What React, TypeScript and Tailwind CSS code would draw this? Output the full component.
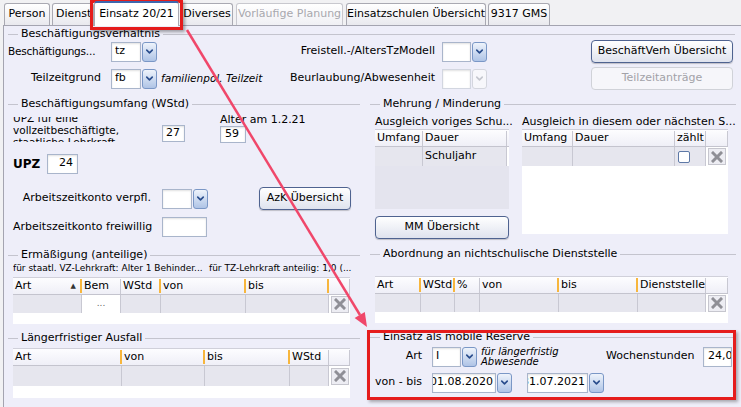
import { ChevronDown } from 'lucide-react';

type Col = { w: string; label?: string; sep?: 'o' | 'g'; sort?: boolean };
type Cell = 'g' | 'dots' | 'x' | 'check' | 'w' | { text: string };

function GroupTitle({ text }: { text: string }) {
  return (
    <div className="flex h-[14px] items-center">
      <div className="h-px w-[10px] bg-[#c4c4ce]" />
      <span className="whitespace-nowrap px-[3px] leading-[14px]">{text}</span>
      <div className="h-px flex-1 bg-[#c4c4ce]" />
    </div>
  );
}

function Combo({ value, textW, disabled, clipLeft }: { value: string; textW: string; disabled?: boolean; clipLeft?: boolean }) {
  return (
    <div className="flex h-[20px] items-stretch">
      <div
        className={`flex items-center overflow-hidden border bg-white shadow-[inset_0_1px_2px_rgba(0,0,0,0.12)] ${textW} ${
          disabled ? 'border-[#d2d6e0]' : 'border-[#a9b5cb]'
        } ${clipLeft ? 'justify-end px-[2px]' : 'px-[3px]'}`}
      >
        <span className="whitespace-nowrap">{value}</span>
      </div>
      <div
        className={`ml-px flex w-[15px] items-center justify-center rounded-[3px] border ${
          disabled
            ? 'border-[#d4d6de] bg-[#f7f7fb] text-[#c4c6ce]'
            : 'border-[#7a97c6] bg-linear-to-b from-[#eef3fb] to-[#afc4e6] text-[#2a4d8d]'
        }`}
      >
        <ChevronDown size={11} strokeWidth={3.5} />
      </div>
    </div>
  );
}

function Field({ value, w, right }: { value: string; w: string; right?: boolean }) {
  return (
    <div
      className={`flex h-full items-center overflow-hidden whitespace-nowrap border border-[#a9b5cb] bg-white px-[4px] shadow-[inset_0_1px_2px_rgba(0,0,0,0.12)] ${w} ${
        right ? 'justify-end' : ''
      }`}
    >
      {value}
    </div>
  );
}

function Btn({ label, w, disabled }: { label: string; w: string; disabled?: boolean }) {
  return (
    <div
      className={`flex h-[23px] items-center justify-center whitespace-nowrap rounded-[4px] border ${w} ${
        disabled
          ? 'border-[#d0d2d8] bg-[#f6f6fa] text-[#a2a2a8]'
          : 'border-[#4f6390] bg-linear-to-b from-white to-[#dfe3ee] shadow-[0_1px_1px_rgba(0,0,0,0.2)]'
      }`}
    >
      {label}
    </div>
  );
}

function XButton() {
  return (
    <div className="flex h-[17px] w-[18px] items-center justify-center border border-[#c6c6ce] bg-[#ededf3]">
      <svg width="12" height="12" viewBox="0 0 12 12">
        <path d="M2 2 L10 10 M10 2 L2 10" stroke="#8f8f96" strokeWidth="3" strokeLinecap="square" />
      </svg>
    </div>
  );
}

function Table({ cols, cells, rowH, fill }: { cols: Col[]; cells: Cell[]; rowH: string; fill: string }) {
  return (
    <div className="border-t border-[#d0d0da]">
      <div className="flex h-[17px] border-b border-[#c4c4ce] bg-linear-to-b from-[#fdfdff] to-[#efeff7]">
        {cols.map((c, i) => (
          <div key={i} className={`flex items-center ${c.w}`}>
            <span className="flex-1 overflow-hidden whitespace-nowrap pl-[2px]">{c.label}</span>
            {c.sort && <span className="mr-[4px] text-[7px] text-[#333]">▲</span>}
            {c.sep === 'o' && <span className="h-[14px] w-[2px] bg-[#f7b63d]" />}
            {c.sep === 'g' && <span className="h-[15px] w-px bg-[#c8c8d2]" />}
          </div>
        ))}
      </div>
      <div className={`flex ${rowH}`}>
        {cols.map((c, i) => {
          const cell = cells[i];
          if (cell === 'x')
            return (
              <div key={i} className={`flex items-center justify-center bg-white ${c.w}`}>
                <XButton />
              </div>
            );
          if (cell === 'check')
            return (
              <div key={i} className={`flex items-center border-r border-[#c8c8d2] bg-[#e6e6ee] pl-[3px] ${c.w}`}>
                <div className="h-[12px] w-[12px] rounded-[2px] border border-[#5d78a6] bg-white" />
              </div>
            );
          if (cell === 'dots')
            return (
              <div key={i} className={`flex items-center justify-center border-r border-[#c8c8d2] bg-white text-[9px] text-[#666] ${c.w}`}>
                ...
              </div>
            );
          if (cell === 'w') return <div key={i} className={`bg-white ${c.w}`} />;
          return (
            <div key={i} className={`flex items-center border-r border-[#c8c8d2] bg-[#e6e6ee] pl-[2px] ${c.w}`}>
              {typeof cell === 'object' ? cell.text : ''}
            </div>
          );
        })}
      </div>
      <div className={fill} />
    </div>
  );
}

export default function App() {
  return (
    <div className="relative h-[407px] w-[741px] overflow-hidden bg-[#f1f1f3] font-['DejaVu_Sans',sans-serif] text-[11px] text-black">
      {/* Tabs */}
      <div className="flex h-[25px] items-end whitespace-nowrap">
        <div className="ml-[4px] flex h-[22px] w-[46px] items-center justify-center rounded-t-[3px] border border-b-0 border-[#a9a9b2] bg-linear-to-b from-white to-[#e9e9ee]">Person</div>
        <div className="ml-[2px] flex h-[22px] w-[42px] items-center overflow-hidden rounded-t-[3px] border border-b-0 border-[#a9a9b2] bg-linear-to-b from-white to-[#e9e9ee] pl-[3px]">Dienst</div>
        <div className="z-10 -mb-px flex h-[25px] w-[85px] items-center justify-center rounded-t-[3px] border border-b-0 border-t-2 border-[#a9a9b2] border-t-[#3e66ad] bg-white">Einsatz 20/21</div>
        <div className="ml-[2px] flex h-[22px] w-[52px] items-center justify-center rounded-t-[3px] border border-b-0 border-[#a9a9b2] bg-linear-to-b from-white to-[#e9e9ee]">Diverses</div>
        <div className="ml-[3px] flex h-[22px] w-[107px] items-center justify-center rounded-t-[3px] border border-b-0 border-[#c8c8ce] bg-linear-to-b from-white to-[#f0f0f4] text-[#a8a8ae]">Vorläufige Planung</div>
        <div className="ml-[3px] flex h-[22px] w-[140px] items-center justify-center rounded-t-[3px] border border-b-0 border-[#a9a9b2] bg-linear-to-b from-white to-[#e9e9ee]">Einsatzschulen Übersicht</div>
        <div className="ml-[2px] flex h-[22px] w-[62px] items-center justify-center rounded-t-[3px] border border-b-0 border-[#a9a9b2] bg-linear-to-b from-white to-[#e9e9ee]">9317 GMS</div>
      </div>

      {/* Panel */}
      <div className="ml-[3px] h-[382px] whitespace-nowrap border-l border-t border-[#a4a4b0] bg-[#eeeef9]">
        {/* Beschäftigungsverhältnis */}
        <div className="pl-[4px] pr-[6px]">
          <div className="pt-px">
            <GroupTitle text="Beschäftigungsverhältnis" />
          </div>
          <div className="-mt-px flex h-[23px] items-center">
            <div className="w-[93px] text-[10.5px] tracking-[-0.2px]">Beschäftigungs...</div>
            <div className="ml-[10px]">
              <Combo value="tz" textW="w-[30px]" />
            </div>
            <div className="w-[278px] text-right">Freistell.-/AltersTzModell</div>
            <div className="ml-[7px]">
              <Combo value="" textW="w-[29px]" />
            </div>
            <div className="ml-[104px]">
              <Btn label="BeschäftVerh Übersicht" w="w-[142px]" />
            </div>
          </div>
          <div className="mt-[4px] flex h-[23px] items-center">
            <div className="w-[93px] text-right">Teilzeitgrund</div>
            <div className="ml-[10px]">
              <Combo value="fb" textW="w-[30px]" />
            </div>
            <div className="ml-[4px] w-[110px] overflow-hidden text-[10.5px] italic">familienpol. Teilzeit</div>
            <div className="w-[164px] text-right">Beurlaubung/Abwesenheit</div>
            <div className="ml-[7px]">
              <Combo value="" textW="w-[29px]" disabled />
            </div>
            <div className="ml-[104px]">
              <Btn label="Teilzeitanträge" w="w-[142px]" disabled />
            </div>
          </div>
        </div>

        <div className="mt-[7px] flex">
          {/* Left column */}
          <div className="w-[361px]">
            <div className="pl-[4px] pr-[5px]">
              <GroupTitle text="Beschäftigungsumfang (WStd)" />
            </div>
            <div className="pl-[9px]">
              <div className="mt-[2px] flex h-[30px]">
                <div className="mt-[4px] flex h-[25px] w-[137px] items-center overflow-hidden">
                  <div className="text-[10.5px] leading-[12px]">
                    UPZ für eine
                    <br />
                    vollzeitbeschäftigte,
                    <br />
                    staatliche Lehrkraft
                  </div>
                </div>
                <div className="ml-[12px] mt-[12px] h-[17px]">
                  <Field value="27" w="w-[23px]" right />
                </div>
                <div className="ml-[35px] flex flex-col">
                  <div className="mt-px h-[11px] leading-[11px]">Alter am 1.2.21</div>
                  <div className="mt-auto h-[17px]">
                    <Field value="59" w="w-[26px]" />
                  </div>
                </div>
              </div>
              <div className="mt-[10px] flex h-[21px] items-center">
                <div className="w-[34px] text-[12px] font-bold">UPZ</div>
                <div className="h-[20px]">
                  <Field value="24" w="w-[31px]" right />
                </div>
              </div>
              <div className="mt-[13px] flex h-[23px] items-center">
                <div className="w-[138px] text-right">Arbeitszeitkonto verpfl.</div>
                <div className="ml-[11px]">
                  <Combo value="" textW="w-[30px]" />
                </div>
                <div className="ml-[51px]">
                  <Btn label="AzK Übersicht" w="w-[92px]" />
                </div>
              </div>
              <div className="mt-[7px] flex h-[20px] items-center">
                <div className="w-[138px] text-right">Arbeitszeitkonto freiwillig</div>
                <div className="ml-[11px] h-[20px]">
                  <Field value="" w="w-[45px]" />
                </div>
              </div>
            </div>
            <div className="mt-[11px] pl-[4px] pr-[5px]">
              <GroupTitle text="Ermäßigung (anteilige)" />
            </div>
            <div className="flex h-[12px] items-center pl-[9px] text-[9px] leading-[12px]">
              <span className="w-[196px] overflow-hidden">für staatl. VZ-Lehrkraft: Alter 1 Behinder...</span>
              <span>für TZ-Lehrkraft anteilig: 1,0 (...</span>
            </div>
            <div className="ml-[9px] mt-[3px] w-[337px]">
              <Table
                cols={[
                  { w: 'w-[69px]', label: 'Art', sep: 'o', sort: true },
                  { w: 'w-[39px]', label: 'Bem', sep: 'g' },
                  { w: 'w-[40px]', label: 'WStd', sep: 'o' },
                  { w: 'w-[85px]', label: 'von', sep: 'o' },
                  { w: 'w-[83px]', label: 'bis', sep: 'o' },
                  { w: 'w-[21px]', sep: 'g' },
                ]}
                cells={['g', 'dots', 'g', 'g', 'g', 'x']}
                rowH="h-[18px]"
                fill="h-[11px] bg-white"
              />
            </div>
            <div className="mt-[7px] pl-[4px] pr-[5px]">
              <GroupTitle text="Längerfristiger Ausfall" />
            </div>
            <div className="ml-[9px] mt-[3px] w-[337px]">
              <Table
                cols={[
                  { w: 'w-[109px]', label: 'Art', sep: 'o' },
                  { w: 'w-[83px]', label: 'von', sep: 'o' },
                  { w: 'w-[85px]', label: 'bis', sep: 'o' },
                  { w: 'w-[39px]', label: 'WStd', sep: 'g' },
                  { w: 'w-[21px]', sep: 'g' },
                ]}
                cells={['g', 'g', 'g', 'g', 'x']}
                rowH="h-[20px]"
                fill="h-[12px] bg-white"
              />
            </div>
          </div>

          {/* Right column */}
          <div className="flex-1">
            <div className="pl-[5px] pr-[5px]">
              <GroupTitle text="Mehrung / Minderung" />
            </div>
            <div className="flex pl-[10px]">
              <div className="w-[134px]">
                <div className="mt-[5px] h-[12px] leading-[12px]">Ausgleich voriges Schu...</div>
                <div className="mt-px">
                  <Table
                    cols={[
                      { w: 'w-[48px]', label: 'Umfang', sep: 'g' },
                      { w: 'w-[84px]', label: 'Dauer', sep: 'g' },
                      { w: 'w-[2px]' },
                    ]}
                    cells={['g', { text: 'Schuljahr' }, 'w']}
                    rowH="h-[19px]"
                    fill="h-[43px] bg-[#e4e4ee]"
                  />
                </div>
                <div className="mt-[7px]">
                  <Btn label="MM Übersicht" w="w-[134px]" />
                </div>
              </div>
              <div className="ml-[13px] w-[206px]">
                <div className="mt-[5px] h-[12px] leading-[12px]">Ausgleich in diesem oder nächsten S...</div>
                <div className="mt-px">
                  <Table
                    cols={[
                      { w: 'w-[51px]', label: 'Umfang', sep: 'g' },
                      { w: 'w-[102px]', label: 'Dauer', sep: 'g' },
                      { w: 'w-[31px]', label: 'zählt', sep: 'g' },
                      { w: 'w-[22px]', sep: 'g' },
                    ]}
                    cells={['g', 'g', 'check', 'x']}
                    rowH="h-[19px]"
                    fill="h-[68px] bg-white"
                  />
                </div>
              </div>
            </div>
            <div className="mt-[8px] pl-[5px] pr-[5px]">
              <GroupTitle text="Abordnung an nichtschulische Dienststelle" />
            </div>
            <div className="ml-[10px] mt-[15px] w-[353px]">
              <Table
                cols={[
                  { w: 'w-[46px]', label: 'Art', sep: 'o' },
                  { w: 'w-[34px]', label: 'WStd', sep: 'o' },
                  { w: 'w-[25px]', label: '%', sep: 'g' },
                  { w: 'w-[79px]', label: 'von', sep: 'o' },
                  { w: 'w-[79px]', label: 'bis', sep: 'o' },
                  { w: 'w-[68px]', label: 'Dienststelle', sep: 'g' },
                  { w: 'w-[22px]', sep: 'g' },
                ]}
                cells={['g', 'g', 'g', 'g', 'g', 'g', 'x']}
                rowH="h-[18px]"
                fill="h-[11px] bg-white"
              />
            </div>
            <div className="mt-[7px] pl-[5px] pr-[5px]">
              <GroupTitle text="Einsatz als mobile Reserve" />
            </div>
            <div className="mt-[2px] flex h-[21px] items-center">
              <div className="w-[57px] text-right">Art</div>
              <div className="ml-[10px]">
                <Combo value="I" textW="w-[29px]" />
              </div>
              <div className="ml-[4px] w-[100px] text-[10px] italic leading-[10px]">
                für längerfristig
                <br />
                Abwesende
              </div>
              <div className="ml-[25px] w-[88px]">Wochenstunden</div>
              <div className="ml-[9px] h-[20px]">
                <Field value="24,0" w="w-[29px]" />
              </div>
            </div>
            <div className="mt-[5px] flex h-[21px] items-center">
              <div className="w-[57px] text-right">von - bis</div>
              <div className="ml-[10px]">
                <Combo value="01.08.2020" textW="w-[64px]" clipLeft />
              </div>
              <div className="ml-[15px]">
                <Combo value="31.07.2021" textW="w-[61px]" clipLeft />
              </div>
            </div>
          </div>
        </div>
      </div>

      {/* Annotations */}
      <div className="absolute left-[90px] top-0 h-[30px] w-[93px] border-[3px] border-[#e51c1c] shadow-[2px_2px_3px_rgba(0,0,0,0.35)]" />
      <div className="absolute left-[367px] top-[330px] h-[70px] w-[369px] border-[3px] border-[#e51c1c] shadow-[2px_2px_3px_rgba(0,0,0,0.3)]" />
      <svg className="pointer-events-none absolute left-0 top-0" width="741" height="407">
        <line x1="187" y1="30" x2="360" y2="315" stroke="#f0476a" strokeWidth="2.5" />
        <polygon points="367,327 354.6,318.1 364.8,311.9" fill="#f0476a" />
      </svg>
    </div>
  );
}
